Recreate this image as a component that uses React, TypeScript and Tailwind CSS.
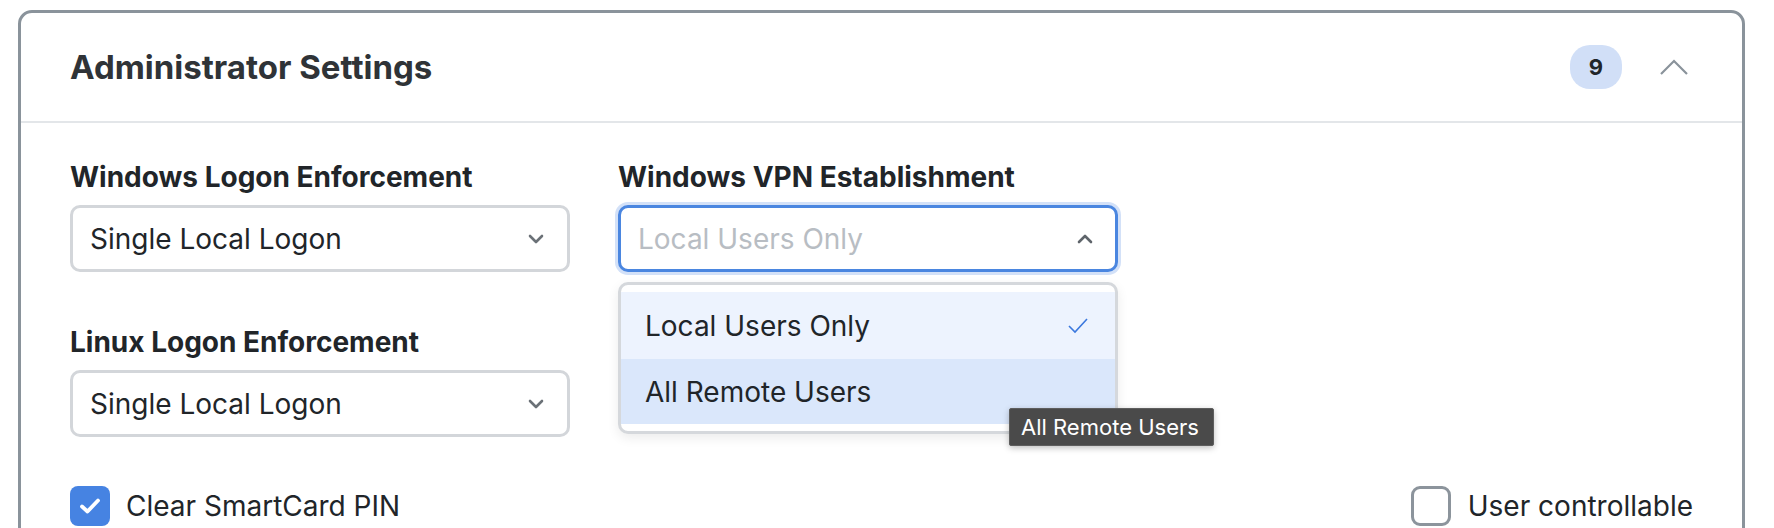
import React from "react";

function ChevronDown({ color = "#6b7177" }: { color?: string }) {
  return (
    <svg width="16" height="10" viewBox="0 0 16 10" fill="none">
      <path d="M2 2 L8 8 L14 2" stroke={color} strokeWidth="2.6" strokeLinecap="round" strokeLinejoin="round" />
    </svg>
  );
}

function ChevronUpSmall({ color = "#6b7177" }: { color?: string }) {
  return (
    <svg width="16" height="10" viewBox="0 0 16 10" fill="none">
      <path d="M2 8 L8 2 L14 8" stroke={color} strokeWidth="2.6" strokeLinecap="round" strokeLinejoin="round" />
    </svg>
  );
}

function Select({ value }: { value: string }) {
  return (
    <div className="flex h-[67px] w-full items-center justify-between rounded-[10px] border-[3px] border-[#d3d6da] bg-white pl-[17px] pr-[23px]">
      <span className="text-[28px] leading-[34px] text-[#212529]">{value}</span>
      <ChevronDown />
    </div>
  );
}

function Label({ children }: { children: React.ReactNode }) {
  return <div className="mb-[12px] text-[28px] font-bold leading-[32px] text-[#212529]">{children}</div>;
}

export default function App() {
  return (
    <div className="min-h-screen bg-white pl-[18px] pt-[10px] font-['Inter',sans-serif] text-[#212529]">
      <div className="w-[1727px] rounded-[14px] border-[3px] border-[#8a939b] bg-white">
        <div className="flex h-[110px] items-center justify-between border-b-2 border-[#e3e6e9] pl-[49px] pr-[54px]">
          <h2 className="text-[33px] font-bold leading-[40px] text-[#2f3337]">Administrator Settings</h2>
          <div className="flex items-center gap-[38px]">
            <span className="flex h-[44px] w-[52px] items-center justify-center rounded-[20px] bg-[#d1dff7] text-[22px] font-bold text-[#212529]">
              9
            </span>
            <svg width="28" height="16" viewBox="0 0 28 16" fill="none">
              <path d="M1 15 L14 2 L27 15" stroke="#8a939b" strokeWidth="2.2" />
            </svg>
          </div>
        </div>

        <div className="px-[49px] pb-[40px] pt-[38px]">
          <div className="grid grid-cols-[500px_500px] gap-x-[48px]">
            <div>
              <Label>Windows Logon Enforcement</Label>
              <Select value="Single Local Logon" />
            </div>
            <div>
              <Label>Windows VPN Establishment</Label>
              <div className="relative">
                <div className="flex h-[67px] w-full items-center justify-between rounded-[10px] border-[3px] border-[#4a86e0] bg-white pl-[17px] pr-[22px] shadow-[0_0_0_3px_#d3e1f8]">
                  <span className="text-[28px] leading-[34px] text-[#b8bdc3]">Local Users Only</span>
                  <ChevronUpSmall color="#5f656b" />
                </div>
                <div className="absolute left-0 top-[77px] z-10 w-full rounded-[10px] border-[3px] border-[#d5d8dc] bg-white py-[7px] shadow-[0_4px_12px_rgba(0,0,0,0.08)]">
                  <div className="flex h-[67px] items-center justify-between bg-[#edf3fe] pl-[24px] pr-[26px]">
                    <span className="text-[28px] leading-[34px] text-[#212529]">Local Users Only</span>
                    <svg width="22" height="18" viewBox="0 0 22 18" fill="none">
                      <path d="M2 9 L8 15 L20 2" stroke="#3b78de" strokeWidth="1.6" />
                    </svg>
                  </div>
                  <div className="flex h-[65px] items-center bg-[#dae7fb] pl-[24px]">
                    <span className="text-[28px] leading-[34px] text-[#212529]">All Remote Users</span>
                  </div>
                  <div className="absolute left-[388px] top-[123px] flex h-[38px] w-[205px] items-center rounded-[2px] border border-[#5e5e5e] bg-[#4a4a4a] px-[11px] shadow-[0_2px_6px_rgba(0,0,0,0.25)]">
                    <span className="whitespace-nowrap text-[22px] leading-[28px] text-white">All Remote Users</span>
                  </div>
                </div>
              </div>
            </div>
            <div className="mt-[54px]">
              <Label>Linux Logon Enforcement</Label>
              <Select value="Single Local Logon" />
            </div>
            <div />
          </div>

          <div className="mt-[49px] flex items-center justify-between">
            <div className="flex items-center gap-[16px]">
              <span className="flex h-[40px] w-[40px] items-center justify-center rounded-[8px] bg-[#4683e2]">
                <svg width="26" height="22" viewBox="0 0 26 22" fill="none">
                  <path d="M5 11.5 L10.5 16.5 L21 5.5" stroke="white" strokeWidth="3.8" strokeLinecap="round" strokeLinejoin="round" />
                </svg>
              </span>
              <span className="text-[28px] leading-[34px] text-[#212529]">Clear SmartCard PIN</span>
            </div>
            <div className="flex items-center gap-[17px]">
              <span className="h-[40px] w-[40px] rounded-[9px] border-[3px] border-[#8c949c] bg-white" />
              <span className="text-[28px] leading-[34px] text-[#212529]">User controllable</span>
            </div>
          </div>
        </div>
      </div>
    </div>
  );
}
